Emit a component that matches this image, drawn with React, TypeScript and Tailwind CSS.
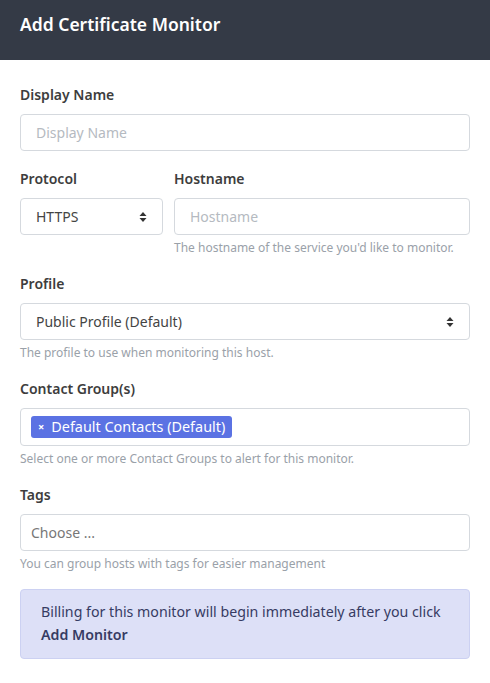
import React, { useState } from "react";

const font = { fontFamily: '"Noto Sans", "Open Sans", sans-serif' };

// Small up/down caret used by the native-looking selects
const Caret: React.FC = () => (
  <svg width="8" height="12" viewBox="0 0 8 12" className="shrink-0">
    <path d="M4 1 L7.5 5 H0.5 Z" fill="#333" />
    <path d="M4 11 L7.5 7 H0.5 Z" fill="#333" />
  </svg>
);

const Label: React.FC<{ children: React.ReactNode }> = ({ children }) => (
  <label className="block text-[14px] font-semibold text-[#3d3d3d] leading-5 mb-[9px]">
    {children}
  </label>
);

const Help: React.FC<{ children: React.ReactNode }> = ({ children }) => (
  <p className="text-[12px] text-[#9aa1a9] leading-4 mt-[5px]">{children}</p>
);

const boxBase =
  "w-full h-[37px] border border-[#d5d9de] rounded-[4px] bg-white text-[14px] text-[#444] flex items-center";
const boxCls = boxBase + " px-[15px]";

const App: React.FC = () => {
  const [displayName, setDisplayName] = useState("");
  const [hostname, setHostname] = useState("");

  return (
    <div className="w-[490px] min-h-[683px] bg-white" style={font}>
      <header className="h-[60px] bg-[#343a46] px-5 pt-[11px]">
        <h1 className="text-[17.5px] leading-[26px] font-semibold text-white">Add Certificate Monitor</h1>
      </header>

      <form className="px-5 pt-[25px]">
        <div className="mb-[18px]">
          <Label>Display Name</Label>
          <input
            value={displayName}
            onChange={(e) => setDisplayName(e.target.value)}
            placeholder="Display Name"
            autoFocus
            className={boxCls + " outline-none placeholder:text-[#b5bac1] caret-[#333]"}
          />
        </div>

        <div className="flex gap-[11px] mb-[18px]">
          <div className="w-[143px] shrink-0">
            <Label>Protocol</Label>
            <div className={boxCls + " justify-between"}>
              <span>HTTPS</span>
              <Caret />
            </div>
          </div>
          <div className="flex-1">
            <Label>Hostname</Label>
            <input
              value={hostname}
              onChange={(e) => setHostname(e.target.value)}
              placeholder="Hostname"
              className={boxCls + " outline-none placeholder:text-[#b5bac1]"}
            />
            <Help>The hostname of the service you'd like to monitor.</Help>
          </div>
        </div>

        <div className="mb-[18px]">
          <Label>Profile</Label>
          <div className={boxCls + " justify-between"}>
            <span>Public Profile (Default)</span>
            <Caret />
          </div>
          <Help>The profile to use when monitoring this host.</Help>
        </div>

        <div className="mb-[18px]">
          <Label>Contact Group(s)</Label>
          <div className="w-full h-[38px] border border-[#d5d9de] rounded-[4px] bg-white px-[10px] flex items-center">
            <span className="inline-flex items-center h-[22px] rounded-[3px] bg-[#5b72e3] text-white text-[14.4px] pl-[7px] pr-[7px] gap-[7px]">
              <span className="text-[11px] font-bold">×</span>
              Default Contacts (Default)
            </span>
          </div>
          <Help>Select one or more Contact Groups to alert for this monitor.</Help>
        </div>

        <div className="mb-[17px]">
          <Label>Tags</Label>
          <div className={boxBase + " px-[10px] text-[#777]"}>Choose ...</div>
          <Help>You can group hosts with tags for easier management</Help>
        </div>

        <div className="border border-[#ccd1f2] bg-[#dde0f7] rounded-[4px] px-5 pt-[11px] pb-[12px] text-[14.2px] leading-[22.5px] text-[#363b63]">
          Billing for this monitor will begin immediately after you click{" "}
          <strong className="font-semibold">Add Monitor</strong>
        </div>
      </form>
    </div>
  );
};

export default App;
